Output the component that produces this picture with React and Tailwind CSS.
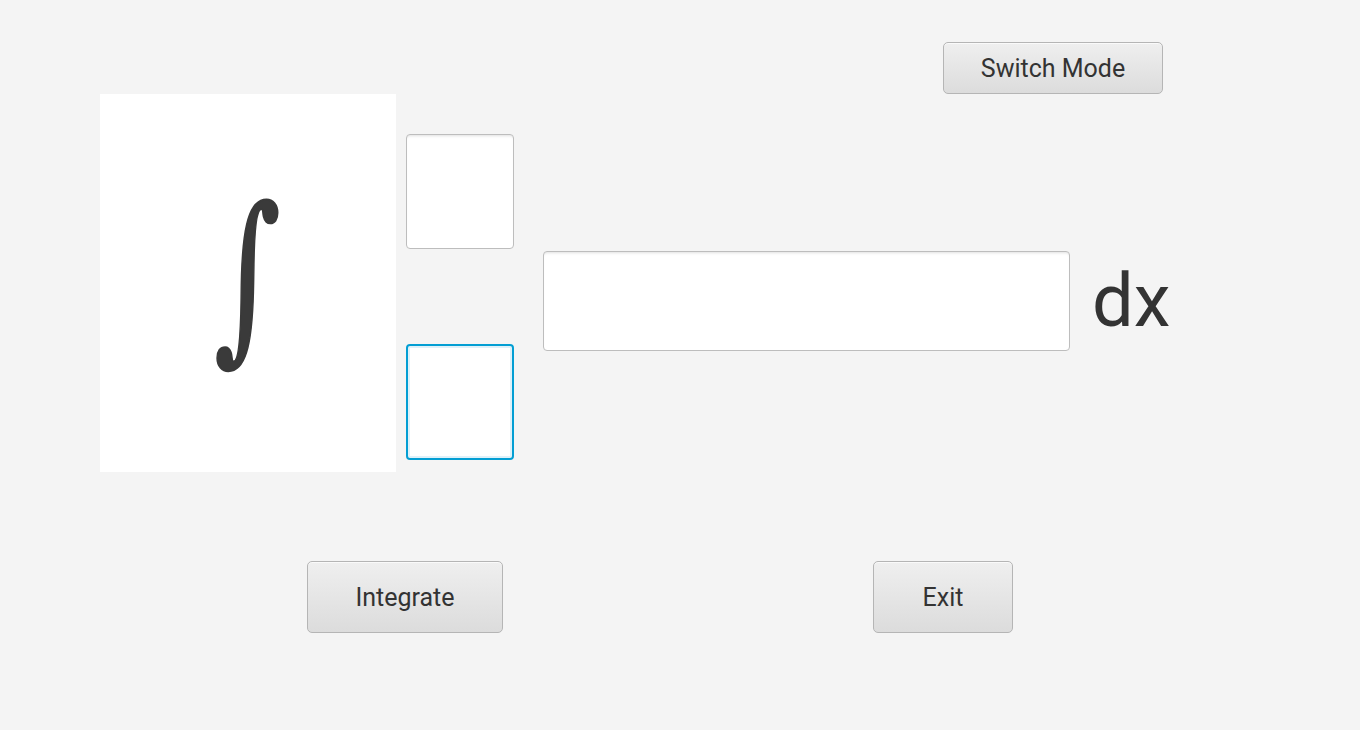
import React from "react";

const btn =
  "flex items-center justify-center rounded-[5px] border border-[#b5b5b5] bg-gradient-to-b from-[#efefef] to-[#dcdcdc] shadow-[inset_0_1px_0_#fafafa] text-[#333333] text-[25px] leading-none";

const field =
  "rounded-[4px] border border-[#bdbdbd] bg-white shadow-[inset_0_3px_3px_-2px_rgba(0,0,0,0.12)]";

export default function App() {
  return (
    <div
      className="w-[1360px] h-[730px] bg-[#f4f4f4] overflow-hidden"
      style={{ fontFamily: "Roboto, 'Liberation Sans', sans-serif" }}
    >
      <div className="pt-[42px] pl-[943px]">
        <div className={btn + " w-[220px] h-[52px]"}>Switch Mode</div>
      </div>

      <div className="flex items-start pl-[100px]">
        <div className="w-[296px] h-[378px] bg-white flex items-center justify-center pb-[18px]">
          <span
            className="inline-block text-[#3a3a3a] text-[183px] leading-none scale-x-[0.7] [-webkit-text-stroke:2px_#3a3a3a]"
            style={{ fontFamily: "'DejaVu Serif', serif" }}
          >
            ∫
          </span>
        </div>

        <div className="ml-[10px] pt-[40px] flex flex-col gap-[95px]">
          <div className={field + " w-[108px] h-[115px]"} />
          <div className="w-[108px] h-[116px] rounded-[4px] border-2 border-[#039ed3] bg-white shadow-[inset_0_0_0_2px_#dff1f9]" />
        </div>

        <div className="ml-[29px] mt-[157px] flex items-center">
          <div className={field + " w-[527px] h-[100px]"} />
          <span className="ml-[22px] text-[74px] leading-none text-[#333333]">dx</span>
        </div>
      </div>

      <div className="mt-[89px] flex pl-[307px]">
        <div className={btn + " w-[196px] h-[72px]"}>Integrate</div>
        <div className={btn + " ml-[370px] w-[140px] h-[72px]"}>Exit</div>
      </div>
    </div>
  );
}
